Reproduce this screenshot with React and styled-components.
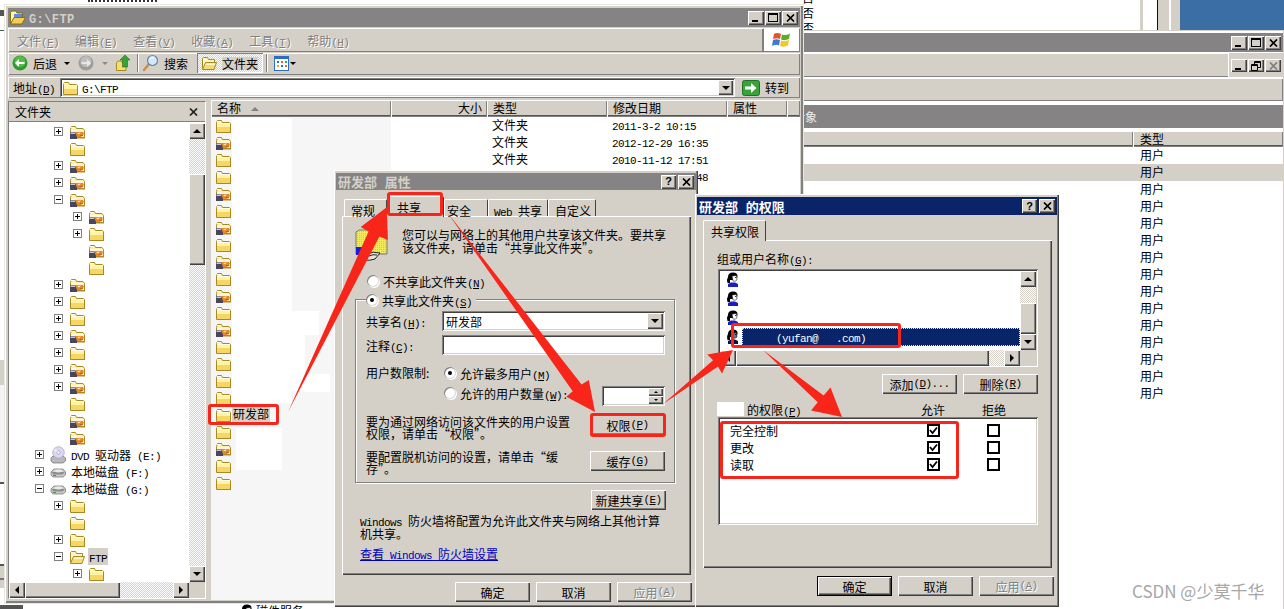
import React from "react";
import styled, { createGlobalStyle, css } from "styled-components";

const Global = createGlobalStyle`
  html, body { margin: 0; padding: 0; background: #fff; }
  body { font: 12px/13px "Noto Sans CJK SC", "Liberation Sans", sans-serif; color: #000; }
  * { box-sizing: border-box; }
`;

const FACE = "#d4d0c8";
const RED = "#f8261a";

const raised = css`
  background: ${FACE};
  box-shadow: inset 1px 1px #fff, inset -1px -1px #404040, inset -2px -2px #808080;
`;
const sunken = css`
  box-shadow: inset 1px 1px #808080, inset -1px -1px #fff, inset 2px 2px #404040, inset -2px -2px ${FACE};
`;
const etched = css`
  background: ${FACE};
  box-shadow: inset 1px 1px #fff, inset -1px -1px #808080;
`;
const dither = css`
  background: repeating-conic-gradient(${FACE} 0% 25%, #fff 0% 50%) 0 0 / 2px 2px;
`;

const Lat = styled.span`
  font-family: "Liberation Mono", monospace;
  font-size: 11px;
  line-height: 0;
  letter-spacing: -0.6px;
  white-space: pre;
`;
const Accel = styled.span`
  text-decoration: underline;
`;
const Tx = ({ t }) =>
  t.split(/([\x20-\x7e]+)/).map((p, i) =>
    /^[\x20-\x7e]+$/.test(p) ? (
      <Lat key={i}>
        {p.split(/&(.)/).map((s, j) => (j % 2 ? <Accel key={j}>{s}</Accel> : s))}
      </Lat>
    ) : (
      p
    )
  );

/* ---------- drawings ---------- */
const Svg = styled.svg`
  display: block;
  flex: none;
`;

const FolderClosed = () => (
  <Svg width="16" height="16" viewBox="0 0 16 16">
    <path d="M1.5 4.5 L2.5 2.5 H6.5 L7.5 4.5 H14 L15.5 5.5 V14.5 H1.5 Z" fill="#fff3a8" stroke="#a88a22" />
    <rect x="2" y="3" width="4" height="1" fill="#fff" />
    <rect x="2" y="5" width="13" height="1" fill="#fffbe0" />
    <rect x="2" y="9" width="13" height="5" fill="#f6d765" />
    <rect x="2" y="14" width="14" height="1" fill="#a88a22" />
  </Svg>
);
const FolderShared = () => (
  <Svg width="16" height="16" viewBox="0 0 16 16">
    <path d="M1.5 5.5 L2.5 2.5 H6.5 L7.5 4.5 H14 L15.5 6.5 V13.5 H1.5 Z" fill="#fff1b0" stroke="#a88a22" />
    <rect x="2" y="3" width="4" height="1" fill="#fff" />
    <rect x="2" y="6" width="13" height="2" fill="#fff8dc" />
    <path d="M1 8 H6 L8 11 V15 H1 Z" fill="#47465c" />
    <path d="M1.5 8.5 H6 V10 H1.5 Z" fill="#c8c8d4" />
    <path d="M6 8 L14 8 L15 10 L12 13 H8 Z" fill="#e98428" />
    <path d="M8 9 L12 8.6 L10 10.6 Z" fill="#ffe9b8" />
    <path d="M11 11 H14 V12 H11 Z" fill="#c85c18" />
    <path d="M8 13 H16 V14.5 H8 Z" fill="#a88a22" />
  </Svg>
);
const FolderOpen = () => (
  <Svg width="16" height="16" viewBox="0 0 16 16">
    <path d="M1.5 13.5 V3.5 L2.5 2.5 H6.5 L7.5 4.5 H13.5 V7" fill="#fff6c8" stroke="#a88a22" />
    <path d="M1.5 14.5 L4.5 7.5 H15.5 L13 14.5 Z" fill="#f7dc72" stroke="#a88a22" />
    <path d="M5 8.5 H14 L13.6 10 H4.6 Z" fill="#fff8c8" />
  </Svg>
);
const Folder = ({ kind }) =>
  kind === "s" ? <FolderShared /> : kind === "o" ? <FolderOpen /> : <FolderClosed />;

const TitleFolder = () => (
  <Svg width="16" height="15" viewBox="0 0 16 15">
    <path d="M.5 13.5 V2.5 L2 1 H6 L7 3 H12.5 V7" fill="#fff3b0" stroke="#8a6c10" />
    <rect x="4" y="4" width="8" height="5" fill="#5c8de0" />
    <path d="M.5 14 L4 7.5 H15.5 L12 14 Z" fill="#f6cd4f" stroke="#8a6c10" />
  </Svg>
);

const NavBall = ({ gray }) => (
  <Svg width="16" height="16" viewBox="0 0 16 16">
    <circle cx="8" cy="8" r="7.5" fill={gray ? "#9c9c9c" : "#2f9a2f"} />
    <circle cx="8" cy="6.5" r="5.5" fill={gray ? "#bdbdbd" : "#55bb44"} />
    {gray ? (
      <path d="M3.5 7 H9 V4 L13 8 L9 12 V9 H3.5 Z" fill="#e8e8e8" />
    ) : (
      <path d="M12.5 7 H7 V4 L3 8 L7 12 V9 H12.5 Z" fill="#fff" />
    )}
  </Svg>
);
const UpIcon = () => (
  <Svg width="16" height="18" viewBox="0 0 16 18">
    <path d="M.5 16.5 V8.5 L2 7 H5 L6 8.5 H10 V16.5 Z" fill="#f7dc72" stroke="#a88a22" />
    <path d="M9 1 L14 6 H11.5 V13 H6.5 V6 H4 Z" fill="#37a336" stroke="#1f6f1f" strokeWidth=".6" />
  </Svg>
);
const SearchIcon = () => (
  <Svg width="16" height="18" viewBox="0 0 16 18">
    <path d="M6 10 L1 16" stroke="#c98c4a" strokeWidth="2.4" strokeLinecap="round" />
    <circle cx="9.5" cy="6.5" r="5" fill="#d6e8fa" stroke="#5f87b5" strokeWidth="1.2" />
    <path d="M7 4.5 Q9 3 11 4" stroke="#fff" fill="none" />
  </Svg>
);
const ViewsIcon = () => (
  <Svg width="15" height="15" viewBox="0 0 15 15">
    <rect x=".5" y=".5" width="14" height="14" fill="#fff" stroke="#2b6fc4" />
    <rect x="1" y="1" width="13" height="2" fill="#2b6fc4" />
    <rect x="3" y="5" width="2" height="2" fill="#2b6fc4" />
    <rect x="7" y="5" width="2" height="2" fill="#e26a2c" />
    <rect x="11" y="5" width="2" height="2" fill="#37a336" />
    <rect x="3" y="9" width="2" height="2" fill="#e0b020" />
    <rect x="7" y="9" width="2" height="2" fill="#2b6fc4" />
    <rect x="11" y="9" width="2" height="2" fill="#e26a2c" />
  </Svg>
);
const WinFlag = () => (
  <Svg width="20" height="20" viewBox="0 0 20 20">
    <path d="M2 4 Q5 2 9 4 L8 9 Q5 7.5 1 9 Z" fill="#e8502a" />
    <path d="M10 4.5 Q14 6 18 3.5 L17 9 Q13 11 9 9.5 Z" fill="#5cab2d" />
    <path d="M1 10 Q4.5 8.5 8 10 L7 15.5 Q4 14 0 16 Z" fill="#3c78d8" />
    <path d="M9 10.5 Q13 12 17 10 L16 15.5 Q12 17.5 8 16 Z" fill="#f9c51e" />
  </Svg>
);
const GoIcon = () => (
  <Svg width="18" height="16" viewBox="0 0 18 16">
    <rect x=".5" y=".5" width="17" height="15" rx="2" fill="#3aa43a" stroke="#20702a" />
    <path d="M3 6.5 H9 V3 L14.5 8 L9 13 V9.5 H3 Z" fill="#fff" />
  </Svg>
);
const DiskIcon = () => (
  <Svg width="16" height="16" viewBox="0 0 16 16">
    <path d="M1 8 L4 5 H13 L15.5 8 V11 L13 13 H3 L1 11 Z" fill="#c9c9c9" stroke="#6e6e6e" strokeWidth=".7" />
    <path d="M1.5 8 H15 L12.5 10.5 H3.5 Z" fill="#8c8c8c" />
    <ellipse cx="8.5" cy="7" rx="4" ry="1.4" fill="#e9e9e9" />
    <rect x="3" y="11" width="3" height="1" fill="#3ca33c" />
  </Svg>
);
const DvdIcon = () => (
  <Svg width="16" height="18" viewBox="0 0 16 18">
    <path d="M1 12 L3 10 H13 L15.5 12 V15 L13 17 H3 L1 15 Z" fill="#b9b9b9" stroke="#6e6e6e" strokeWidth=".7" />
    <circle cx="8.5" cy="6.5" r="5.8" fill="#dcd6f2" stroke="#9a9ab8" strokeWidth=".6" />
    <circle cx="8.5" cy="6.5" r="1.6" fill="#fff" stroke="#8a8aa8" strokeWidth=".6" />
    <path d="M5 2.5 L8 6 L4 5 Z" fill="#f5f0ff" />
  </Svg>
);
const ShareFolderBig = () => (
  <Svg width="33" height="32" viewBox="0 0 33 32">
    <defs>
      <pattern id="dz" width="2" height="2" patternUnits="userSpaceOnUse">
        <rect width="2" height="2" fill="#f0ea58" />
        <rect width="1" height="1" fill="#c6c488" />
      </pattern>
    </defs>
    <path d="M1 3 L4 1 H32 V25 H1 Z" fill="url(#dz)" stroke="#777" />
    <rect x="1" y="18" width="12" height="8" fill="#1a1ae0" />
    <path d="M10 31 L12 25 Q18 22 25 24 L20 30 Q14 32 10 31 Z" fill="#e8e4dc" stroke="#222" />
    <path d="M14 27 Q18 25 22 26" stroke="#222" fill="none" />
  </Svg>
);
const UserIcon = ({ dim }) => (
  <UserSvg $dim={dim} width="13" height="15" viewBox="0 0 13 15">
    <path d="M2 5 Q2 0.5 7 .5 Q12 .5 11.5 5 L10 8 H4 L4 11 H1.5 Q.5 7 2 5 Z" fill="#000" />
    <path d="M6 4 L10.5 3.5 L11 8 Q9 10 7 9 Z" fill="#fff" stroke="#000" strokeWidth=".5" />
    <rect x="9" y="5" width="1" height="1" fill="#2222c8" />
    <path d="M2 15 V12 L5 10.5 H9 L12 12 V15 Z" fill="#1c1cc0" />
  </UserSvg>
);
const UserSvg = styled(Svg)`
  ${(p) => p.$dim && "filter: brightness(.45);"}
`;
const Check = () => (
  <Svg width="9" height="9" viewBox="0 0 9 9">
    <path d="M1 4 L3.5 7 L8 1.5" fill="none" stroke="#000" strokeWidth="1.8" />
  </Svg>
);
const XGlyph = () => (
  <Svg width="9" height="8" viewBox="0 0 9 8">
    <path d="M1 .5 L8 7.5 M8 .5 L1 7.5" stroke="currentColor" strokeWidth="1.7" />
  </Svg>
);
const RestoreGlyph = () => (
  <Svg width="10" height="10" viewBox="0 0 10 10">
    <path d="M3.5 3 V.5 H9.5 V6.5 H7 M3 1.5 H9.5" fill="none" stroke="#000" />
    <path d="M.5 3.5 H6.5 V9.5 H.5 Z M.5 4.5 H6.5" fill="none" stroke="#000" />
  </Svg>
);

const arrowPts = ([tx, ty], [px, py], shaft, headLen, headW) => {
  const dx = px - tx, dy = py - ty, L = Math.hypot(dx, dy);
  const ux = dx / L, uy = dy / L, nx = -uy, ny = ux;
  const bx = px - ux * headLen, by = py - uy * headLen;
  const neckX = px - ux * headLen * 0.78, neckY = py - uy * headLen * 0.78;
  const p = (x, y) => `${x.toFixed(1)},${y.toFixed(1)}`;
  return [
    p(tx, ty),
    p(bx + (nx * shaft) / 2, by + (ny * shaft) / 2),
    p(neckX - ux * 6 + (nx * headW) / 2, neckY - uy * 6 + (ny * headW) / 2),
    p(px, py),
    p(neckX - ux * 6 - (nx * headW) / 2, neckY - uy * 6 - (ny * headW) / 2),
    p(bx - (nx * shaft) / 2, by - (ny * shaft) / 2),
  ].join(" ");
};

/* ---------- canvas ---------- */
const Desktop = styled.div`
  position: relative;
  width: 1284px;
  height: 609px;
  overflow: hidden;
  background: #fff;
`;
const AnnotLayer = styled.svg`
  position: absolute;
  left: 0;
  top: 0;
  z-index: 20;
  pointer-events: none;
`;
const Highlight = styled.div`
  position: absolute;
  z-index: 21;
  left: ${(p) => p.$x}px;
  top: ${(p) => p.$y}px;
  width: ${(p) => p.$w}px;
  height: ${(p) => p.$h}px;
  border: 3px solid ${RED};
  border-radius: 3px;
`;
const Watermark = styled.div`
  position: absolute;
  z-index: 22;
  left: 1132px;
  top: 581px;
  font: 17px/20px "Noto Sans CJK SC", "Liberation Sans", sans-serif;
  color: #a6a6a6;
  white-space: nowrap;
`;

/* backdrop bits */
const TopDots = styled.div`
  position: absolute;
  left: 88px;
  top: 0;
  width: 69px;
  height: 2px;
  border-top: 2px dotted #333;
`;
const TopRightStrip = styled.div`
  position: absolute;
  left: 1140px;
  top: 0;
  width: 144px;
  height: 31px;
  display: flex;
`;
const StripPart = styled.div`
  width: ${(p) => p.$w}px;
  background: ${(p) => p.$c};
  flex: ${(p) => (p.$grow ? 1 : "none")};
`;
const CutColumn = styled.div`
  position: absolute;
  left: 802px;
  top: -9px;
  display: flex;
  flex-direction: column;
  gap: 2px;
`;
const LeftStrip = styled.div`
  position: absolute;
  left: 0;
  top: 0;
  width: 5px;
  height: 609px;
  display: flex;
  flex-direction: column;
`;
const LeftBit = styled.div`
  height: ${(p) => p.$h}px;
  background: ${(p) => p.$c};
  flex: none;
`;
const BelowRow = styled.div`
  position: absolute;
  left: 25px;
  top: 603px;
  width: 780px;
  height: 6px;
  display: flex;
  align-items: flex-start;
  padding-left: 215px;
  gap: 3px;
  border-top: 1px solid ${FACE};
  overflow: hidden;
`;
const BelowTab = styled.div`
  position: absolute;
  left: 0;
  top: 605px;
  width: 23px;
  height: 4px;
  background: #555;
`;

/* ---------- shared chrome ---------- */
const TitleBar = styled.div`
  display: flex;
  align-items: center;
  height: ${(p) => p.$h || 18}px;
  padding: 0 2px 0 2px;
  background: ${(p) => (p.$active ? "#0a246a" : "#858384")};
  color: ${(p) => (p.$active ? "#fff" : FACE)};
  font-weight: 700;
  font-size: 13px;
  flex: none;
`;
const TitleText = styled.span`
  margin-left: ${(p) => p.$ml || 0}px;
  flex: 1;
  white-space: nowrap;
  & span {
    letter-spacing: 0.4px;
    font-size: 12px;
  }
`;
const CaptionGroup = styled.div`
  display: flex;
  gap: ${(p) => p.$gap ?? 1}px;
`;
const CapBtn = styled.div`
  ${raised}
  width: ${(p) => p.$w || 16}px;
  height: ${(p) => p.$h || 14}px;
  display: flex;
  align-items: center;
  justify-content: center;
  color: ${(p) => (p.$off ? "#808080" : "#000")};
  font: 700 11px/11px "Liberation Sans", sans-serif;
`;
const MinGlyph = styled.i`
  display: block;
  width: 6px;
  height: 2px;
  background: #000;
  margin-top: 6px;
  margin-right: 2px;
`;
const MaxGlyph = styled.i`
  display: block;
  width: 10px;
  height: 9px;
  border: 1px solid #000;
  border-top-width: 2px;
`;

const ArrowGlyph = styled.i`
  display: block;
  width: 0;
  height: 0;
  border: ${(p) => p.$s || 4}px solid transparent;
  ${(p) => p.$dir === "up" && `border-bottom-color:#000;border-top-width:0;`}
  ${(p) => p.$dir === "down" && `border-top-color:#000;border-bottom-width:0;`}
  ${(p) => p.$dir === "left" && `border-right-color:#000;border-left-width:0;`}
  ${(p) => p.$dir === "right" && `border-left-color:#000;border-right-width:0;`}
`;
const ScrollBtn = styled.div`
  ${raised}
  width: ${(p) => p.$w || 16}px;
  height: ${(p) => p.$h || 16}px;
  flex: none;
  display: flex;
  align-items: center;
  justify-content: center;
`;
const VBar = styled.div`
  display: flex;
  flex-direction: column;
  width: 16px;
`;
const HBar = styled.div`
  display: flex;
  height: 16px;
`;
const Track = styled.div`
  ${dither}
  flex: ${(p) => (p.$len ? "none" : 1)};
  ${(p) => p.$v && p.$len && `height:${p.$len}px;`}
  ${(p) => !p.$v && p.$len && `width:${p.$len}px;`}
`;
const Thumb = styled.div`
  ${raised}
  flex: none;
  ${(p) => (p.$v ? `height:${p.$len}px;` : `width:${p.$len}px;`)}
`;
const Corner = styled.div`
  background: ${FACE};
`;

const Button = styled.div`
  ${raised}
  width: 75px;
  height: 20px;
  flex: none;
  display: flex;
  align-items: center;
  justify-content: center;
  white-space: nowrap;
  color: ${(p) => (p.$off ? "#808080" : "#000")};
  ${(p) => p.$off && "text-shadow: 1px 1px #fff;"}
  ${(p) =>
    p.$default &&
    `box-shadow: inset 0 0 0 1px #000, inset 2px 2px #fff, inset -2px -2px #404040, inset -3px -3px #808080;`}
`;
const ButtonRow = styled.div`
  display: flex;
  justify-content: flex-end;
  gap: 6px;
  margin-top: ${(p) => p.$mt || 0}px;
  padding-right: ${(p) => p.$pr || 0}px;
  flex: none;
`;

/* ---------- back window ---------- */
const BackWindow = styled.div`
  position: absolute;
  left: 780px;
  top: 30px;
  width: 504px;
  height: 579px;
  background: #fff;
  border-top: 1px solid ${FACE};
  border-right: 1px solid ${FACE};
  padding-top: 2px;
  display: flex;
  flex-direction: column;
`;
const BackCaption = styled(CaptionGroup)`
  padding-left: 1px;
  margin-left: auto;
`;
const BackMenu = styled.div`
  ${etched}
  height: 24px;
  margin-top: 1px;
  display: flex;
  flex: none;
  justify-content: flex-end;
`;
const MdiButtons = styled(CaptionGroup)`
  width: 55px;
  padding: 6px 0 0 3px;
  background: ${FACE};
  box-shadow: inset 1px 0 #fff;
`;
const BackToolbar = styled.div`
  ${etched}
  height: 23px;
  margin-top: 1px;
  flex: none;
`;
const ObjectBar = styled.div`
  height: 23px;
  margin-top: 4px;
  padding-left: 13px;
  background: #858384;
  color: #eee;
  flex: none;
  display: flex;
  align-items: center;
`;
const TableHeader = styled.div`
  display: grid;
  grid-template-columns: 353px 1fr;
  height: 16px;
  margin-top: 3px;
  flex: none;
`;
const HeadCell = styled.div`
  background: ${FACE};
  box-shadow: inset 1px 1px #fff, inset -1px -1px #808080, inset 0 -2px #555;
  padding: 1px ${(p) => p.$pr || 0}px 0 ${(p) => p.$pl || 6}px;
  white-space: nowrap;
  text-align: ${(p) => p.$align || "left"};
`;
const TableRow = styled.div`
  height: 17px;
  padding: 1px 0 0 360px;
  flex: none;
  background: ${(p) => (p.$sel ? FACE : "#fff")};
`;

/* ---------- explorer ---------- */
const Explorer = styled.div`
  position: absolute;
  left: 5px;
  top: 5px;
  width: 798px;
  height: 598px;
  padding: 3px 3px 0;
  background: ${FACE};
  box-shadow: inset 1px 1px #fff, inset -1px -1px #808080, inset -2px -2px #808080;
  outline: 1px solid #e8e6e0;
  display: flex;
  flex-direction: column;
`;
const MenuRow = styled.div`
  display: flex;
  height: 24px;
  margin-top: 1px;
  flex: none;
`;
const MenuBar = styled.div`
  ${etched}
  flex: 1;
  display: flex;
  align-items: center;
  gap: 16px;
  padding-left: 9px;
  color: #808080;
  text-shadow: 1px 1px #fff;
`;
const MenuItem = styled.span`
  white-space: nowrap;
`;
const LogoBox = styled.div`
  width: 37px;
  background: #fff;
  border: 1px solid #808080;
  border-top-color: #fff;
  display: flex;
  align-items: center;
  justify-content: center;
`;
const Toolbar = styled.div`
  ${etched}
  height: 22px;
  margin-top: 1px;
  flex: none;
  display: flex;
  align-items: center;
  padding: 0 0 2px 4px;
`;
const ToolGap = styled.span`
  width: ${(p) => p.$w}px;
  flex: none;
`;
const ToolLabel = styled.span`
  margin-left: 5px;
  white-space: nowrap;
`;
const ToolSep = styled.i`
  display: block;
  width: 2px;
  height: 18px;
  background: #808080;
  border-right: 1px solid #fff;
  flex: none;
`;
const PressedTool = styled.div`
  ${dither}
  box-shadow: inset 1px 1px #808080, inset -1px -1px #fff;
  width: 66px;
  height: 20px;
  display: flex;
  align-items: center;
  padding-left: 4px;
  flex: none;
`;
const PressedLabel = styled.span`
  margin-left: 5px;
  background: ${FACE};
  white-space: nowrap;
`;
const TinyDrop = styled(ArrowGlyph)`
  border-top-color: ${(p) => (p.$gray ? "#8a8a8a" : "#000")};
  flex: none;
`;
const AddressRow = styled.div`
  ${etched}
  height: 21px;
  margin-top: 2px;
  flex: none;
  display: flex;
  align-items: center;
  padding-left: 5px;
`;
const AddressLabel = styled.span`
  width: 40px;
  flex: none;
  white-space: nowrap;
`;
const AddressField = styled.div`
  width: 675px;
  height: 19px;
  margin-left: 7px;
  background: #fff;
  ${sunken}
  display: flex;
  align-items: center;
  padding-left: 2px;
  gap: 4px;
  position: relative;
`;
const AddressDrop = styled(ScrollBtn)`
  position: absolute;
  right: 2px;
  top: 2px;
  height: 15px;
`;
const AddressText = styled.span`
  flex: 1;
`;
const GoBtn = styled.div`
  display: flex;
  align-items: center;
  gap: 5px;
  margin-left: 7px;
  white-space: nowrap;
`;
const Panes = styled.div`
  display: flex;
  height: 500px;
  margin-top: 2px;
  flex: none;
`;
const TreePane = styled.div`
  width: 198px;
  height: 498px;
  margin-top: 1px;
  border: 1px solid #808080;
  border-right-color: #fff;
  border-bottom-color: #fff;
  display: flex;
  flex-direction: column;
  background: #fff;
  flex: none;
`;
const TreeHeader = styled.div`
  height: 20px;
  background: ${FACE};
  border-bottom: 1px solid #808080;
  display: flex;
  align-items: center;
  justify-content: space-between;
  padding: 0 7px 0 6px;
  flex: none;
`;
const TreeClose = styled.span`
  display: flex;
  color: #222;
`;
const TreeBody = styled.div`
  flex: 1;
  min-height: 0;
  margin-top: 1px;
  display: grid;
  grid-template-columns: 1fr 16px;
  grid-template-rows: 1fr 16px;
`;
const TreeRows = styled.div`
  overflow: hidden;
`;
const TreeRow = styled.div`
  height: 17px;
  display: flex;
  align-items: center;
  padding-left: ${(p) => 26 + p.$lvl * 19}px;
`;
const Expander = styled.span`
  width: 9px;
  height: 9px;
  flex: none;
  margin-right: 6px;
  border: 1px solid #808080;
  position: relative;
  background: #fff;
  visibility: ${(p) => (p.$kind ? "visible" : "hidden")};
  &::before {
    content: "";
    position: absolute;
    left: 1px;
    top: 3px;
    width: 5px;
    height: 1px;
    background: #000;
  }
  &::after {
    content: "";
    position: absolute;
    left: 3px;
    top: 1px;
    width: 1px;
    height: 5px;
    background: #000;
    display: ${(p) => (p.$kind === "+" ? "block" : "none")};
  }
`;
const TreeLabel = styled.span`
  margin-left: ${(p) => p.$ml ?? 5}px;
  white-space: nowrap;
  padding: ${(p) => (p.$sel ? "2px 1px" : "0")};
  background: ${(p) => (p.$sel ? FACE : "transparent")};
`;
const ListPane = styled.div`
  width: 589px;
  margin-left: 5px;
  display: flex;
  flex-direction: column;
  flex: none;
`;
const ListHeader = styled.div`
  display: grid;
  grid-template-columns: 180px 96px 120px 120px 60px 1fr;
  height: 17px;
  flex: none;
`;
const SortMark = styled(ArrowGlyph)`
  display: inline-block;
  border-bottom-color: #808080;
  margin-left: 10px;
  vertical-align: 2px;
`;
const ListBody = styled.div`
  position: relative;
  flex: 1;
  background: linear-gradient(to right, #f6f6f6 180px, #fff 180px);
`;
const Patch = styled.div`
  position: absolute;
  left: ${(p) => p.$x}px;
  top: ${(p) => p.$y}px;
  width: ${(p) => p.$w}px;
  height: ${(p) => p.$h}px;
  background: #fff;
`;
const ListRow = styled.div`
  position: relative;
  display: grid;
  grid-template-columns: 180px 96px 120px 120px;
  height: 17px;
  align-items: center;
`;
const NameCell = styled.div`
  display: flex;
  align-items: center;
  padding-left: 4px;
`;
const NameLabel = styled.span`
  margin: -2px 0 0 1px;
  padding: 2px 1px;
  background: ${FACE};
`;
const ValueCell = styled.div`
  padding: 0 0 2px 5px;
  white-space: nowrap;
`;

/* ---------- dialogs ---------- */
const Dialog = styled.div`
  position: absolute;
  left: ${(p) => p.$x}px;
  top: ${(p) => p.$y}px;
  width: 364px;
  height: ${(p) => p.$h}px;
  padding: 3px 2px 0;
  z-index: ${(p) => p.$z};
  ${raised}
  display: flex;
  flex-direction: column;
`;
const TabRow = styled.div`
  display: flex;
  align-items: flex-end;
  height: 17px;
  margin-top: ${(p) => p.$mt}px;
  padding-left: ${(p) => p.$pl}px;
  flex: none;
  position: relative;
  z-index: 1;
`;
const Tab = styled.div`
  width: ${(p) => p.$w}px;
  height: ${(p) => (p.$sel ? 21 : 17)}px;
  ${(p) => p.$sel && "margin-bottom: -1px;"}
  padding: 4px 0 0 ${(p) => p.$pl}px;
  background: ${FACE};
  border-top: 1px solid #fff;
  border-left: 1px solid #fff;
  border-right: 1px solid #404040;
  border-radius: 2px 2px 0 0;
  white-space: nowrap;
  flex: none;
`;
const Panel = styled.div`
  margin-left: 6px;
  width: 349px;
  height: ${(p) => p.$h}px;
  flex: none;
  box-shadow: inset 1px 1px #fff, inset -1px -1px #404040, inset -2px -2px #808080;
  display: flex;
  flex-direction: column;
`;

const Intro = styled.div`
  display: flex;
  gap: 14px;
  padding: 13px 0 0 13px;
  height: 57px;
  flex: none;
`;
const Lines = styled.div`
  white-space: nowrap;
  line-height: 12.5px;
  padding-top: ${(p) => p.$pt || 0}px;
`;
const RadioRow = styled.label`
  display: flex;
  align-items: center;
  gap: 4px;
  white-space: nowrap;
  height: ${(p) => p.$h || 16}px;
  padding-left: ${(p) => p.$pl || 0}px;
`;
const RadioDot = styled.span`
  width: 12px;
  height: 12px;
  flex: none;
  border-radius: 50%;
  background: #fff;
  box-shadow: inset 1px 1px #808080, 1px 1px #fff, inset 0 0 0 1px #d8d8d8;
  position: relative;
  &::after {
    content: "";
    display: ${(p) => (p.$on ? "block" : "none")};
    position: absolute;
    left: 4px;
    top: 4px;
    width: 4px;
    height: 4px;
    border-radius: 50%;
    background: #000;
  }
`;
const ShareGroup = styled.div`
  position: relative;
  margin: 10px 0 0 13px;
  width: 320px;
  height: 184px;
  flex: none;
  border: 1px solid #808080;
  box-shadow: 1px 1px #fff, inset 1px 1px #fff;
  padding: 11px 9px 0 10px;
`;
const GroupLegend = styled.div`
  position: absolute;
  left: 10px;
  top: -8px;
  padding-right: 4px;
  background: ${FACE};
`;
const FieldRow = styled.div`
  display: flex;
  align-items: center;
  height: 20px;
  margin-bottom: 4px;
`;
const FieldLabel = styled.span`
  width: 76px;
  flex: none;
  white-space: nowrap;
`;
const FieldBox = styled.div`
  flex: 1;
  height: 20px;
  background: #fff;
  ${sunken}
  display: flex;
  align-items: center;
  padding-left: 4px;
  position: relative;
`;
const ComboBtn = styled(ScrollBtn)`
  position: absolute;
  right: 2px;
  top: 2px;
`;
const LimitBlock = styled.div`
  display: flex;
  margin-top: 10px;
  height: 42px;
`;
const LimitLabel = styled.div`
  width: 78px;
  flex: none;
  white-space: nowrap;
  margin-top: 1px;
`;
const LimitChoices = styled.div`
  flex: 1;
  display: flex;
  flex-direction: column;
  gap: 4px;
`;
const LimitLine = styled.div`
  display: flex;
  align-items: center;
  height: 16px;
`;
const SpinBox = styled.div`
  width: 63px;
  height: 20px;
  margin-left: auto;
  margin-top: 6px;
  background: #fff;
  ${sunken}
  position: relative;
  flex: none;
`;
const SpinBtns = styled.div`
  position: absolute;
  right: 2px;
  top: 2px;
  width: 15px;
  display: flex;
  flex-direction: column;
`;
const SpinBtn = styled(ScrollBtn)`
  width: 15px;
  height: 8px;
`;
const ActionRow = styled.div`
  display: flex;
  justify-content: space-between;
  align-items: center;
  margin-top: ${(p) => p.$mt}px;
  height: ${(p) => p.$h}px;
`;
const NewShareWrap = styled.div`
  display: flex;
  justify-content: flex-end;
  padding-right: 25px;
  margin-top: 7px;
  flex: none;
`;
const FirewallText = styled.div`
  margin: 5px 0 0 18px;
  white-space: nowrap;
  line-height: 12.5px;
  flex: none;
`;
const FirewallLink = styled.a`
  margin: 7px 0 0 18px;
  color: #0000c0;
  text-decoration: underline;
  white-space: nowrap;
  flex: none;
  align-self: flex-start;
`;

const PermLabel = styled.div`
  margin: 12px 0 0 14px;
  height: 14px;
  flex: none;
`;
const UserList = styled.div`
  position: relative;
  margin: 3px 0 0 15px;
  width: 320px;
  height: 98px;
  flex: none;
  ${sunken}
  background: #fff;
  padding: 2px;
  display: grid;
  grid-template-columns: 1fr 16px;
  grid-template-rows: 1fr 16px;
`;
const UserRows = styled.div`
  margin-top: -1px;
  display: flex;
  flex-direction: column;
  overflow: hidden;
`;
const UserRow = styled.div`
  display: flex;
  align-items: center;
  height: 19px;
  padding-left: 6px;
  gap: 3px;
  flex: none;
`;
const UserName = styled.div`
  flex: 1;
  height: 18px;
  padding: 2px 0 0 34px;
  color: #fff;
  background: ${(p) => (p.$sel ? "#0a246a" : "transparent")};
  outline: ${(p) => (p.$sel ? "1px dotted #f2e7a0" : "none")};
  outline-offset: -1px;
`;
const PermHead = styled.div`
  display: flex;
  align-items: center;
  margin: 8px 0 0 14px;
  height: 14px;
  flex: none;
  white-space: nowrap;
`;
const RedactBox = styled.span`
  width: 27px;
  height: 14px;
  background: #fff;
  margin-right: 3px;
  flex: none;
`;
const PermHeadLabels = styled.span`
  display: flex;
  margin-left: auto;
  gap: 37px;
  padding-right: 46px;
`;
const PermBox = styled.div`
  margin: 1px 0 0 15px;
  width: 320px;
  height: 108px;
  flex: none;
  ${sunken}
  background: #fff;
  padding: 5px 0 0 12px;
`;
const PermRow = styled.div`
  display: grid;
  grid-template-columns: 197px 60px 14px;
  align-items: center;
  height: 17px;
`;
const CheckBox = styled.span`
  width: 13px;
  height: 13px;
  border: 2px solid #000;
  background: #fff;
  display: flex;
  align-items: center;
  justify-content: center;
`;

const ScrollV = ({ before, thumb }) => (
  <VBar>
    <ScrollBtn><ArrowGlyph $dir="up" /></ScrollBtn>
    <Track $v $len={before} />
    <Thumb $v $len={thumb} />
    <Track $v />
    <ScrollBtn><ArrowGlyph $dir="down" /></ScrollBtn>
  </VBar>
);
const ScrollH = ({ thumb }) => (
  <HBar>
    <ScrollBtn><ArrowGlyph $dir="left" /></ScrollBtn>
    <Thumb $len={thumb} />
    <Track />
    <ScrollBtn><ArrowGlyph $dir="right" /></ScrollBtn>
  </HBar>
);

/* ---------- data ---------- */
const tree = [
  [1, "+", "s"], [1, "", "c"], [1, "+", "s"], [1, "+", "s"], [1, "-", "s"],
  [2, "+", "s"], [2, "+", "c"], [2, "", "s"], [2, "", "c"],
  [1, "+", "s"], [1, "+", "c"], [1, "+", "c"], [1, "+", "s"], [1, "+", "c"], [1, "+", "s"], [1, "+", "s"],
  [1, "", "c"], [1, "", "s"], [1, "", "s"],
  [0, "+", "dvd", "DVD 驱动器 (E:)"], [0, "+", "disk", "本地磁盘 (F:)"], [0, "-", "disk", "本地磁盘 (G:)"],
  [1, "+", "c"], [1, "", "c"], [1, "+", "c"], [1, "-", "o", "FTP"], [2, "+", "c"],
];
const listKinds = "cscc scs cs cs cs cccccc s cc".replace(/ /g, "").split("");
const listMeta = {
  0: ["文件夹", "2011-3-2 10:15"],
  1: ["文件夹", "2012-12-29 16:35"],
  2: ["文件夹", "2010-11-12 17:51"],
  3: ["文件夹", "2012-12-29 16:48"],
};
const patches = [
  [21, 1, 60, 193], [21, 194, 87, 24], [21, 218, 73, 56], [94, 257, 25, 18], [21, 274, 60, 12], [25, 311, 46, 42],
];
const menu = ["文件(&F)", "编辑(&E)", "查看(&V)", "收藏(&A)", "工具(&T)", "帮助(&H)"];

export default function App() {
  return (
    <Desktop>
      <Global />
      <TopDots />
      <LeftStrip>
        <LeftBit $h={10} $c="#fff" />
        <LeftBit $h={6} $c="#555" />
        <LeftBit $h={14} $c="#fff" />
        <LeftBit $h={1} $c="#555" />
        <LeftBit $h={329} $c="#fff" />
        <LeftBit $h={25} $c={FACE} />
        <LeftBit $h={97} $c="#f4f4f4" />
        <LeftBit $h={2} $c="#555" />
        <LeftBit $h={80} $c="#fff" />
        <LeftBit $h={2} $c="#555" />
        <LeftBit $h={12} $c={FACE} />
        <LeftBit $h={2} $c="#777" />
        <LeftBit $h={8} $c={FACE} />
        <LeftBit $h={21} $c="#fff" />
      </LeftStrip>
      <BelowTab />
      <BelowRow>
        <UserIcon />
        <span>磁件服务</span>
      </BelowRow>
      <CutColumn>
        <span>否</span>
        <span>否</span>
        <span>否</span>
      </CutColumn>
      <TopRightStrip>
        <StripPart $w={3} $c={FACE} />
        <StripPart $w={14} $c="#fff" />
        <StripPart $w={1} $c="#111" />
        <StripPart $w={11} $c={FACE} />
        <StripPart $w={2} $c="#fff" />
        <StripPart $w={9} $c={FACE} />
        <StripPart $grow $c="#3a6ea5" />
      </TopRightStrip>

      <BackWindow>
        <TitleBar $h={19}>
          <BackCaption $gap={1}>
            <CapBtn><MinGlyph /></CapBtn>
            <CapBtn><MaxGlyph /></CapBtn>
            <CapBtn><XGlyph /></CapBtn>
          </BackCaption>
        </TitleBar>
        <BackMenu>
          <MdiButtons>
            <CapBtn $h={13}><MinGlyph /></CapBtn>
            <CapBtn $h={13}><RestoreGlyph /></CapBtn>
            <CapBtn $h={13} $off><XGlyph /></CapBtn>
          </MdiButtons>
        </BackMenu>
        <BackToolbar />
        <ObjectBar>对象</ObjectBar>
        <TableHeader>
          <HeadCell />
          <HeadCell $pl={7}>类型</HeadCell>
        </TableHeader>
        {Array.from({ length: 15 }, (_, i) => (
          <TableRow key={i} $sel={i === 1}>用户</TableRow>
        ))}
      </BackWindow>

      <Explorer>
        <TitleBar $h={19}>
          <TitleFolder />
          <TitleText $ml={3}><Tx t="G:\FTP" /></TitleText>
          <CaptionGroup>
            <CapBtn><MinGlyph /></CapBtn>
            <CapBtn><MaxGlyph /></CapBtn>
            <CapBtn><XGlyph /></CapBtn>
          </CaptionGroup>
        </TitleBar>
        <MenuRow>
          <MenuBar>
            {menu.map((m) => (
              <MenuItem key={m}><Tx t={m} /></MenuItem>
            ))}
          </MenuBar>
          <LogoBox><WinFlag /></LogoBox>
        </MenuRow>
        <Toolbar>
          <NavBall />
          <ToolLabel>后退</ToolLabel>
          <ToolGap $w={7} />
          <TinyDrop $dir="down" $s={3} />
          <ToolGap $w={8} />
          <NavBall gray />
          <ToolGap $w={8} />
          <TinyDrop $dir="down" $s={3} $gray />
          <ToolGap $w={8} />
          <UpIcon />
          <ToolGap $w={5} />
          <ToolSep />
          <ToolGap $w={4} />
          <SearchIcon />
          <ToolLabel>搜索</ToolLabel>
          <ToolGap $w={9} />
          <PressedTool>
            <FolderOpen />
            <PressedLabel>文件夹</PressedLabel>
          </PressedTool>
          <ToolGap $w={3} />
          <ToolSep />
          <ToolGap $w={6} />
          <ViewsIcon />
          <ToolGap $w={1} />
          <TinyDrop $dir="down" $s={3} />
        </Toolbar>
        <AddressRow>
          <AddressLabel><Tx t="地址(&D)" /></AddressLabel>
          <AddressField>
            <FolderClosed />
            <AddressText><Tx t="G:\FTP" /></AddressText>
            <AddressDrop $w={15}><ArrowGlyph $dir="down" /></AddressDrop>
          </AddressField>
          <GoBtn>
            <GoIcon />
            转到
          </GoBtn>
        </AddressRow>
        <Panes>
          <TreePane>
            <TreeHeader>
              <span>文件夹</span>
              <TreeClose><XGlyph /></TreeClose>
            </TreeHeader>
            <TreeBody>
              <TreeRows>
                {tree.map(([lvl, exp, icon, label], i) => (
                  <TreeRow key={i} $lvl={lvl}>
                    <Expander $kind={exp} />
                    {icon === "dvd" ? <DvdIcon /> : icon === "disk" ? <DiskIcon /> : <Folder kind={icon} />}
                    {label && (
                      <TreeLabel $sel={label === "FTP"} $ml={label === "FTP" ? 3 : 5}>
                        <Tx t={label} />
                      </TreeLabel>
                    )}
                  </TreeRow>
                ))}
              </TreeRows>
              <ScrollV before={35} thumb={91} />
              <ScrollH thumb={95} />
              <Corner />
            </TreeBody>
          </TreePane>
          <ListPane>
            <ListHeader>
              <HeadCell>名称<SortMark $dir="up" $s={4} /></HeadCell>
              <HeadCell $align="right" $pr={5}>大小</HeadCell>
              <HeadCell>类型</HeadCell>
              <HeadCell>修改日期</HeadCell>
              <HeadCell>属性</HeadCell>
              <HeadCell />
            </ListHeader>
            <ListBody>
              {patches.map(([x, y, w, h], i) => (
                <Patch key={i} $x={x} $y={y} $w={w} $h={h} />
              ))}
              {listKinds.map((k, i) => (
                <ListRow key={i}>
                  <NameCell>
                    <Folder kind={k} />
                    {i === 17 && <NameLabel>研发部</NameLabel>}
                  </NameCell>
                  <span />
                  {listMeta[i] ? <ValueCell>{listMeta[i][0]}</ValueCell> : <span />}
                  {listMeta[i] ? <ValueCell><Tx t={listMeta[i][1]} /></ValueCell> : <span />}
                </ListRow>
              ))}
            </ListBody>
          </ListPane>
        </Panes>
      </Explorer>

      <Dialog $x={334} $y={170} $h={437} $z={5}>
        <TitleBar $h={17}>
          <TitleText><Tx t="研发部 属性" /></TitleText>
          <CaptionGroup $gap={2}>
            <CapBtn $w={15}>?</CapBtn>
            <CapBtn><XGlyph /></CapBtn>
          </CaptionGroup>
        </TitleBar>
        <TabRow $mt={9} $pl={8}>
          <Tab $w={43} $pl={6}>常规</Tab>
          <Tab $w={57} $sel $pl={9}>共享</Tab>
          <Tab $w={44} $pl={2}>安全</Tab>
          <Tab $w={60} $pl={5}><Tx t="Web 共享" /></Tab>
          <Tab $w={48} $pl={6}>自定义</Tab>
        </TabRow>
        <Panel $h={359}>
          <Intro>
            <ShareFolderBig />
            <Lines>
              您可以与网络上的其他用户共享该文件夹。要共享
              <br />
              该文件夹，请单击“共享此文件夹”。
            </Lines>
          </Intro>
          <RadioRow $pl={25}>
            <RadioDot />
            <span><Tx t="不共享此文件夹(&N)" /></span>
          </RadioRow>
          <ShareGroup>
            <GroupLegend>
              <RadioRow>
                <RadioDot $on />
                <span><Tx t="共享此文件夹(&S)" /></span>
              </RadioRow>
            </GroupLegend>
            <FieldRow>
              <FieldLabel><Tx t="共享名(&H):" /></FieldLabel>
              <FieldBox>
                研发部
                <ComboBtn><ArrowGlyph $dir="down" /></ComboBtn>
              </FieldBox>
            </FieldRow>
            <FieldRow>
              <FieldLabel><Tx t="注释(&C):" /></FieldLabel>
              <FieldBox />
            </FieldRow>
            <LimitBlock>
              <LimitLabel>用户数限制:</LimitLabel>
              <LimitChoices>
                <LimitLine>
                  <RadioRow>
                    <RadioDot $on />
                    <span><Tx t="允许最多用户(&M)" /></span>
                  </RadioRow>
                </LimitLine>
                <LimitLine>
                  <RadioRow>
                    <RadioDot />
                    <span><Tx t="允许的用户数量(&W):" /></span>
                  </RadioRow>
                  <SpinBox>
                    <SpinBtns>
                      <SpinBtn><ArrowGlyph $dir="up" $s={2} /></SpinBtn>
                      <SpinBtn><ArrowGlyph $dir="down" $s={2} /></SpinBtn>
                    </SpinBtns>
                  </SpinBox>
                </LimitLine>
              </LimitChoices>
            </LimitBlock>
            <ActionRow $mt={6} $h={24}>
              <Lines $pt={6}>
                要为通过网络访问该文件夹的用户设置
                <br />
                权限，请单击“权限”。
              </Lines>
              <Button><Tx t="权限(&P)" /></Button>
            </ActionRow>
            <ActionRow $mt={10} $h={28}>
              <Lines $pt={4}>
                要配置脱机访问的设置，请单击“缓
                <br />
                存”。
              </Lines>
              <Button><Tx t="缓存(&G)" /></Button>
            </ActionRow>
          </ShareGroup>
          <NewShareWrap>
            <Button><Tx t="新建共享(&E)" /></Button>
          </NewShareWrap>
          <FirewallText>
            <Tx t="Windows 防火墙将配置为允许此文件夹与网络上其他计算" />
            <br />
            机共享。
          </FirewallText>
          <FirewallLink><Tx t="查看 Windows 防火墙设置" /></FirewallLink>
        </Panel>
        <ButtonRow $mt={7} $pr={4}>
          <Button>确定</Button>
          <Button>取消</Button>
          <Button $off><Tx t="应用(&A)" /></Button>
        </ButtonRow>
      </Dialog>

      <Dialog $x={695} $y={194} $h={413} $z={6}>
        <TitleBar $h={18} $active>
          <TitleText><Tx t="研发部 的权限" /></TitleText>
          <CaptionGroup $gap={2}>
            <CapBtn $w={15}>?</CapBtn>
            <CapBtn><XGlyph /></CapBtn>
          </CaptionGroup>
        </TitleBar>
        <TabRow $mt={8} $pl={6}>
          <Tab $w={63} $sel $pl={7}>共享权限</Tab>
        </TabRow>
        <Panel $h={328}>
          <PermLabel><Tx t="组或用户名称(&G):" /></PermLabel>
          <UserList>
            <UserRows>
              {[0, 1, 2, 3].map((i) => (
                <UserRow key={i}>
                  <UserIcon dim={i === 3} />
                  <UserName $sel={i === 3}>{i === 3 && <Tx t="(yufan@   .com)" />}</UserName>
                </UserRow>
              ))}
            </UserRows>
            <ScrollV before={16} thumb={31} />
            <ScrollH thumb={253} />
            <Corner />
          </UserList>
          <ButtonRow $mt={7} $pr={14}>
            <Button><Tx t="添加(&D)..." /></Button>
            <Button><Tx t="删除(&R)" /></Button>
          </ButtonRow>
          <PermHead>
            <RedactBox />
            <span><Tx t="的权限(&P)" /></span>
            <PermHeadLabels>
              <span>允许</span>
              <span>拒绝</span>
            </PermHeadLabels>
          </PermHead>
          <PermBox>
            {["完全控制", "更改", "读取"].map((p) => (
              <PermRow key={p}>
                <span>{p}</span>
                <CheckBox><Check /></CheckBox>
                <CheckBox />
              </PermRow>
            ))}
          </PermBox>
        </Panel>
        <ButtonRow $mt={8} $pr={3}>
          <Button $default>确定</Button>
          <Button>取消</Button>
          <Button $off><Tx t="应用(&A)" /></Button>
        </ButtonRow>
      </Dialog>

      <AnnotLayer width="1284" height="609" viewBox="0 0 1284 609">
        <polygon fill={RED} points={arrowPts([288, 412], [387, 207], 12, 30, 30)} />
        <polygon fill={RED} points={arrowPts([447, 212], [595, 412], 11, 30, 28)} />
        <polygon fill={RED} points={arrowPts([663, 404], [733, 350], 8, 22, 24)} />
        <polygon fill={RED} points={arrowPts([763, 350], [842, 417], 9, 28, 30)} />
      </AnnotLayer>
      <Highlight $x={208} $y={404} $w={71} $h={21} />
      <Highlight $x={387} $y={192} $w={56} $h={24} />
      <Highlight $x={590} $y={413} $w={76} $h={24} />
      <Highlight $x={731} $y={323} $w={170} $h={25} />
      <Highlight $x={720} $y={421} $w={239} $h={58} />
      <Watermark>CSDN @少莫千华</Watermark>
    </Desktop>
  );
}
